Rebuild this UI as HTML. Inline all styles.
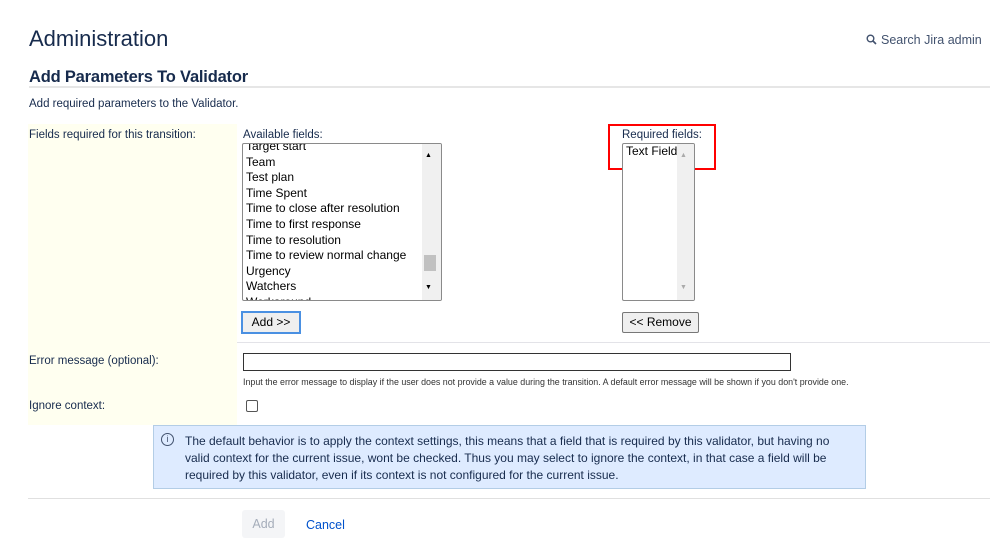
<!DOCTYPE html>
<html><head><style>
body{margin:0;width:999px;height:544px;background:#fff;font-family:"Liberation Sans",sans-serif;color:#172b4d;position:relative;overflow:hidden}
.a{position:absolute;white-space:nowrap}
.lb{font-size:11.5px;color:#172b4d}
.list{position:absolute;border:1px solid #8a8a8a;border-radius:2px;background:#fff;overflow:hidden}
.list div{font-size:12px;color:#000;line-height:15.6px;padding-left:3px}
.sb{position:absolute;top:0;bottom:0;background:#f0f0f0}
</style></head><body>
<div class="a" style="left:29px;top:26px;font-size:22px;color:#172b4d">Administration</div>
<div class="a" style="left:866px;top:33px;font-size:12.5px;color:#42526e"><svg width="11" height="11" viewBox="0 0 11 11" style="vertical-align:-1px;margin-right:4px"><circle cx="4.5" cy="4.5" r="3.3" fill="none" stroke="#42526e" stroke-width="1.4"/><path d="M7 7l3 3" stroke="#42526e" stroke-width="1.6"/></svg>Search Jira admin</div>
<div class="a" style="left:29px;top:68px;font-size:16.5px;font-weight:bold;color:#172b4d;letter-spacing:-0.2px">Add Parameters To Validator</div>
<div class="a" style="left:29px;top:86px;width:961px;height:2px;background:#e6e6e6"></div>
<div class="a" style="left:29px;top:98px;font-size:11.5px">Add required parameters to the Validator.</div>
<div class="a" style="left:28px;top:124px;width:209px;height:301px;background:#fffff0"></div>
<div class="a lb" style="left:29px;top:129px">Fields required for this transition:</div>
<div class="a lb" style="left:243px;top:129px">Available fields:</div>
<div class="list" style="left:242px;top:143px;width:198px;height:156px">
<div style="margin-top:-5px">Target start</div><div>Team</div><div>Test plan</div><div>Time Spent</div><div>Time to close after resolution</div><div>Time to first response</div><div>Time to resolution</div><div>Time to review normal change</div><div>Urgency</div><div>Watchers</div><div>Workaround</div>
<div class="sb" style="right:0;width:16px"><div style="position:absolute;left:3px;top:4px;font-size:7px;color:#000;padding:0">▲</div><div style="position:absolute;left:2px;top:111px;width:12px;height:16px;background:#c1c1c1;padding:0"></div><div style="position:absolute;left:3px;bottom:4px;font-size:7px;color:#000;padding:0">▼</div></div>
</div>
<div class="a" style="left:241px;top:311px;width:56px;height:19px;border:2px solid #4a90e2;background:#efefef;font-size:12px;line-height:19px;text-align:center;color:#000">Add &gt;&gt;</div>
<div class="a" style="left:608px;top:124px;width:104px;height:42px;border:2.5px solid #f00"></div>
<div class="a lb" style="left:622px;top:129px">Required fields:</div>
<div class="list" style="left:622px;top:143px;width:71px;height:156px">
<div style="line-height:14px">Text Field</div>
<div class="sb" style="right:0;width:14px"><div style="position:absolute;left:3px;top:4px;font-size:7px;color:#aaa;padding:0">▲</div><div style="position:absolute;left:3px;bottom:4px;font-size:7px;color:#aaa;padding:0">▼</div></div>
</div>
<div class="a" style="left:622px;top:312px;width:75px;height:19px;border:1px solid #777;border-radius:2px;background:#efefef;font-size:12px;line-height:19px;text-align:center;color:#000">&lt;&lt; Remove</div>
<div class="a" style="left:237px;top:342px;width:753px;height:1px;background:#e3e3e8"></div>
<div class="a lb" style="left:29px;top:355px">Error message (optional):</div>
<div class="a" style="left:243px;top:353px;width:546px;height:16px;border:1px solid #333;background:#fff"></div>
<div class="a" style="left:243px;top:377px;font-size:8.9px;color:#333">Input the error message to display if the user does not provide a value during the transition. A default error message will be shown if you don't provide one.</div>
<div class="a" style="left:246px;top:400px;width:10px;height:10px;border:1px solid #555;border-radius:2px"></div>
<div class="a lb" style="left:29px;top:400px">Ignore context:</div>
<div class="a" style="left:153px;top:425px;width:711px;height:62px;background:#deebff;border:1px solid #b3cde6"></div>
<div class="a" style="left:161px;top:433px;width:11px;height:11px;border:1px solid #42526e;border-radius:50%;font-size:9px;line-height:11px;text-align:center;color:#42526e">i</div>
<div class="a" style="left:185px;top:433px;font-size:12px;line-height:17px;color:#172b4d">The default behavior is to apply the context settings, this means that a field that is required by this validator, but having no<br>valid context for the current issue, wont be checked. Thus you may select to ignore the context, in that case a field will be<br>required by this validator, even if its context is not configured for the current issue.</div>
<div class="a" style="left:28px;top:498px;width:962px;height:1px;background:#e0e0e0"></div>
<div class="a" style="left:242px;top:510px;width:43px;height:28px;background:#f4f5f7;border-radius:3px;font-size:12.5px;line-height:28px;text-align:center;color:#a5adba">Add</div>
<div class="a" style="left:306px;top:518px;font-size:12.5px;color:#0052cc">Cancel</div>
</body></html>
